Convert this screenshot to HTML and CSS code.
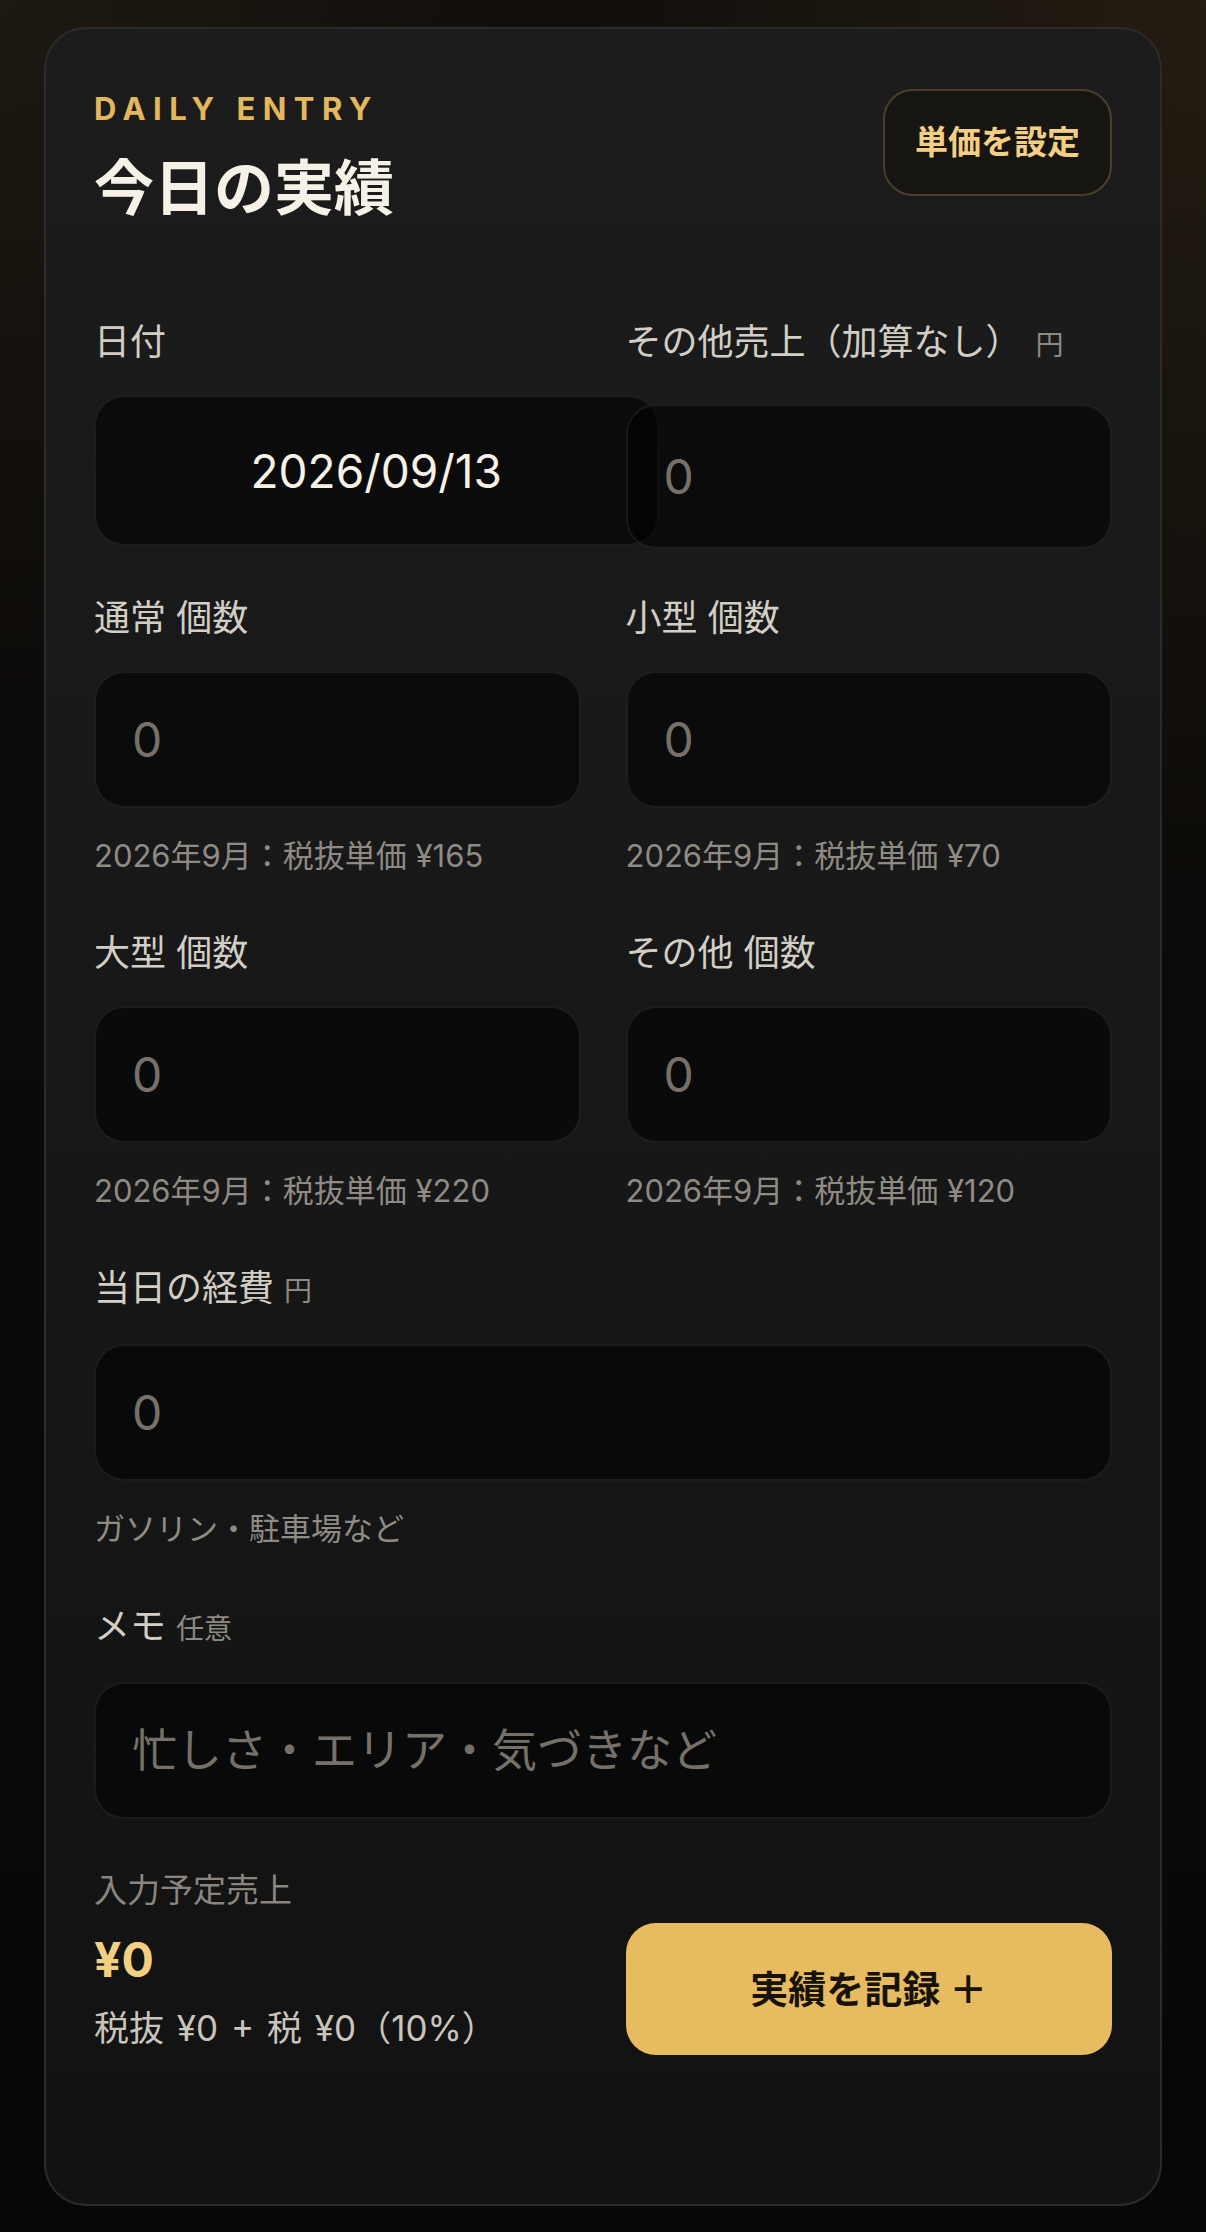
FILE: index.html
```html
<!DOCTYPE html>
<html lang="ja">
<head>
<meta charset="utf-8">
<title>今日の実績</title>
<link rel="stylesheet" href="styles.css">
</head>
<body>
<main class="page">
  <section class="card">
    <header class="card-head">
      <div class="head-text">
        <p class="eyebrow">DAILY ENTRY</p>
        <h1 class="title">今日の実績</h1>
      </div>
      <button class="btn-outline" type="button">単価を設定</button>
    </header>

    <div class="grid">
      <div class="field">
        <label class="label">日付</label>
        <input class="input input-date" type="text" value="2026/09/13">
      </div>
      <div class="field">
        <label class="label">その他売上（加算なし）<span class="unit">円</span></label>
        <input class="input input-other" type="text" placeholder="0">
      </div>

      <div class="field">
        <label class="label">通常 個数</label>
        <input class="input" type="text" placeholder="0">
        <p class="help">2026年9月：税抜単価 ¥165</p>
      </div>
      <div class="field">
        <label class="label">小型 個数</label>
        <input class="input" type="text" placeholder="0">
        <p class="help">2026年9月：税抜単価 ¥70</p>
      </div>

      <div class="field">
        <label class="label">大型 個数</label>
        <input class="input" type="text" placeholder="0">
        <p class="help">2026年9月：税抜単価 ¥220</p>
      </div>
      <div class="field">
        <label class="label">その他 個数</label>
        <input class="input" type="text" placeholder="0">
        <p class="help">2026年9月：税抜単価 ¥120</p>
      </div>

      <div class="field span-2">
        <label class="label">当日の経費<span class="unit unit-tight">円</span></label>
        <input class="input" type="text" placeholder="0">
        <p class="help">ガソリン・駐車場など</p>
      </div>

      <div class="field span-2">
        <label class="label">メモ<span class="unit unit-tight">任意</span></label>
        <input class="input input-memo" type="text" placeholder="忙しさ・エリア・気づきなど">
      </div>
    </div>

    <div class="summary">
      <div class="summary-text">
        <p class="summary-label">入力予定売上</p>
        <p class="summary-total">¥0</p>
        <p class="summary-detail">税抜 ¥0 + 税 ¥0（10%）</p>
      </div>
      <button class="btn-primary" type="button">実績を記録 ＋</button>
    </div>
  </section>
</main>
</body>
</html>
```

FILE: styles.css
```css
* {
  box-sizing: border-box;
}

html, body {
  margin: 0;
  padding: 0;
}

body {
  min-height: 2232px;
  background-color: #080808;
  background-image:
    radial-gradient(ellipse 700px 900px at 100% 0%, rgba(74, 58, 30, 0.34), rgba(74, 58, 30, 0) 100%),
    radial-gradient(ellipse 600px 700px at 0% 0%, rgba(60, 48, 28, 0.32), rgba(60, 48, 28, 0) 100%),
    linear-gradient(180deg, #0f0d0b 0%, #070707 100%);
  font-family: Inter, "Noto Sans CJK JP", sans-serif;
  color: #d0ccc4;
}

.page {
  padding: 27px 44px 29px;
}

.card {
  border: 2px solid #2b2b2b;
  border-radius: 42px;
  background: linear-gradient(180deg, #1c1c1c 0%, #171717 50%, #121212 100%);
  padding: 60px 48px 149px;
}

/* header */
.card-head {
  display: flex;
  justify-content: space-between;
  align-items: flex-start;
  margin-bottom: 93px;
}

.eyebrow {
  margin: 0 0 23px;
  font-size: 31px;
  line-height: 40px;
  font-weight: 700;
  letter-spacing: 0.24em;
  color: #e3b75e;
}

.title {
  margin: 0;
  font-size: 60px;
  line-height: 72px;
  font-weight: 700;
  color: #f6f1e7;
}

.btn-outline {
  height: 107px;
  padding: 0 30px;
  border: 2px solid #4a3f2b;
  border-radius: 30px;
  background: rgba(20, 18, 14, 0.6);
  color: #f3cf86;
  font-family: Inter, "Noto Sans CJK JP", sans-serif;
  font-size: 33px;
  font-weight: 700;
  line-height: 1;
}

/* form grid */
.grid {
  display: grid;
  grid-template-columns: 1fr 1fr;
  column-gap: 45px;
  row-gap: 44px;
}

.span-2 {
  grid-column: 1 / -1;
}

.field {
  display: flex;
  flex-direction: column;
  min-width: 0;
}

.label {
  display: block;
  margin-bottom: 28px;
  font-size: 36px;
  line-height: 50px;
  font-weight: 400;
  color: #d2cec6;
  white-space: nowrap;
}

.unit {
  margin-left: 14px;
  font-size: 28px;
  color: #8e8a83;
}

.unit-tight {
  margin-left: 10px;
}

.input {
  display: block;
  width: 100%;
  height: 137px;
  margin: 0;
  padding: 0 36px;
  border: 2px solid rgba(255, 255, 255, 0.075);
  border-radius: 30px;
  background: rgba(0, 0, 0, 0.55);
  font-family: Inter, "Noto Sans CJK JP", sans-serif;
  font-size: 48px;
  color: #f4efe6;
  outline: none;
  -webkit-appearance: none;
  appearance: none;
}

.input::placeholder {
  color: #75716a;
  opacity: 1;
}

.input-date {
  width: calc(100% + 78px);
  height: 151px;
  text-align: center;
  font-size: 46px;
  color: #f6f1e7;
}

.input-other {
  margin-top: 6px;
  height: 145px;
}

.input-memo {
  padding-left: 36px;
  font-size: 45px;
}

.help {
  margin: 23px 0 3px;
  font-size: 31px;
  line-height: 50px;
  color: #8f8b84;
  white-space: nowrap;
}

/* summary */
.summary {
  display: grid;
  grid-template-columns: 1fr 1fr;
  column-gap: 45px;
  align-items: end;
  margin-top: 49px;
}

.summary-text {
  padding-bottom: 4px;
}

.summary-label {
  margin: 0;
  font-size: 33px;
  line-height: 44px;
  color: #8a867f;
}

.summary-total {
  margin: 18px 0 0;
  font-size: 48px;
  line-height: 60px;
  font-weight: 700;
  color: #f3cf82;
}

.summary-detail {
  margin: 15px 0 0;
  font-size: 35px;
  line-height: 46px;
  word-spacing: 3px;
  color: #c9c5bd;
  white-space: nowrap;
}

.btn-primary {
  height: 132px;
  width: 100%;
  border: none;
  border-radius: 30px;
  background: #e7bb5f;
  color: #17120a;
  font-family: Inter, "Noto Sans CJK JP", sans-serif;
  font-size: 38px;
  font-weight: 700;
  line-height: 1;
}
```
